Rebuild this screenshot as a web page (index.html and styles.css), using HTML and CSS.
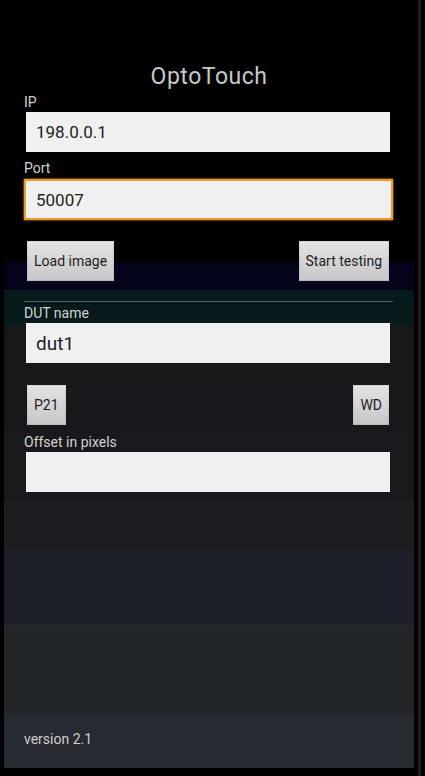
FILE: index.html
```
<!DOCTYPE html>
<html lang="en">
<head>
<meta charset="utf-8">
<title>OptoTouch</title>
<link rel="stylesheet" href="styles.css">
</head>
<body>
<div class="screen">
  <main class="panel">
    <h1 class="title">OptoTouch</h1>
    <div class="label label-ip">IP</div>
    <div class="field">198.0.0.1</div>
    <div class="label label-port">Port</div>
    <div class="field field-focused">50007</div>
    <div class="button-row row-top">
      <button class="btn">Load image</button>
      <button class="btn">Start testing</button>
    </div>
    <hr class="divider">
    <div class="label label-dut">DUT name</div>
    <div class="field field-large">dut1</div>
    <div class="button-row row-mid">
      <button class="btn">P21</button>
      <button class="btn">WD</button>
    </div>
    <div class="label label-offset">Offset in pixels</div>
    <div class="field"></div>
    <div class="version">version 2.1</div>
  </main>
  <div class="scroll-strip"></div>
</div>
</body>
</html>
```
FILE: styles.css
```
html, body {
  margin: 0;
  padding: 0;
  background: #000;
}

body {
  font-family: Roboto, "Noto Sans", sans-serif;
}

.screen {
  display: flex;
  width: 425px;
  height: 776px;
  overflow: hidden;
}

.panel {
  box-sizing: border-box;
  width: 410px;
  height: 768px;
  margin-left: 4px;
  padding: 0 20px 21px 20px;
  display: flex;
  flex-direction: column;
  background: linear-gradient(to bottom,
    #000000 0px, #000000 262px,
    #03041a 262px, #03041a 290px,
    #071a1b 290px, #071a1b 325px,
    #1a1718 325px, #1a1718 382px,
    #17171c 382px, #17171c 430px,
    #19181d 430px, #19181d 500px,
    #1e1c21 500px, #1e1c21 548px,
    #1d2029 548px, #1d2029 625px,
    #222629 625px, #222629 715px,
    #262a31 715px, #262a31 768px);
}

.scroll-strip {
  width: 3px;
  height: 776px;
  margin-left: 4px;
  background: #1e1e1e;
}

.title {
  margin: 63px 0 0 0;
  font-size: 23px;
  line-height: 27px;
  font-weight: 400;
  letter-spacing: 0.5px;
  color: #c8c8c8;
  text-align: center;
}

.label {
  font-size: 14px;
  line-height: 16px;
  color: #d2d2d2;
}

.label-ip { margin-top: 4px; }
.label-port { margin-top: 8px; }
.label-dut { margin-top: 3px; }
.label-offset { margin-top: 9px; }

.field {
  box-sizing: border-box;
  height: 40px;
  margin: 2px 4px 0 2px;
  padding-left: 10px;
  display: flex;
  align-items: center;
  font-size: 17px;
  color: #222;
  background: #f0f0f0;
}

.field-focused {
  height: 41px;
  margin: 3px 1px 0 0;
  border: 2px solid #f0972a;
  box-shadow: 0 0 2px #f7b057;
}

.field-large {
  font-size: 19px;
}

.button-row {
  display: flex;
  justify-content: space-between;
  margin-left: 3px;
  margin-right: 5px;
}

.row-top { margin-top: 21px; }
.row-mid { margin-top: 22px; }

.btn {
  height: 40px;
  padding: 0 7px;
  border: none;
  font-family: Roboto, "Noto Sans", sans-serif;
  font-size: 14px;
  color: #1e1e1e;
  background: linear-gradient(to bottom, #e4e4e4, #c6c6c6);
  box-shadow: inset 0 0 0 1px rgba(0, 0, 0, 0.06);
}

.divider {
  height: 1px;
  margin: 20px 1px 0 0;
  border: none;
  background: #56616a;
}

.version {
  margin-top: auto;
  font-size: 14px;
  line-height: 16px;
  color: #cfcfcf;
}
```
